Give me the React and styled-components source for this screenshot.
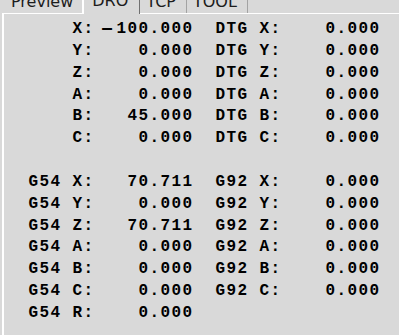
import React from "react";
import styled, { createGlobalStyle } from "styled-components";

const ADV = 11.0; // character advance in the DRO text
const LINE = 21.85;
const BG = "#d9d9d9";

const Global = createGlobalStyle`
  html, body {
    margin: 0;
    padding: 0;
    background: ${BG};
    overflow: hidden;
  }
`;

const Window = styled.div`
  width: 399px;
  height: 335px;
  display: flex;
  flex-direction: column;
  background: ${BG};
  overflow: hidden;
`;

const TabBar = styled.div`
  display: flex;
  height: 13px;
  padding-left: 5px;
  flex: none;
`;

const Tab = styled.div`
  position: relative;
  box-sizing: border-box;
  height: ${(p) => (p.$active ? "14px" : "13px")};
  margin: ${(p) => (p.$active ? "0 0 -1px -2px" : "0")};
  padding: ${(p) => (p.$active ? "0 11px 0 8px" : "0 10px 0 6px")};
  border-left: ${(p) => (p.$active ? "2px solid #ffffff" : "none")};
  border-right: 1px solid ${(p) => (p.$active ? "#707070" : "#a3a3a3")};
  background: ${BG};
  z-index: ${(p) => (p.$active ? 2 : 0)};
  font-family: "DejaVu Sans", sans-serif;
  font-size: 16px;
  line-height: 16px;
  color: #1c1c1c;
  white-space: nowrap;
`;

const TabLabel = styled.span`
  display: block;
  margin-top: ${(p) => (p.$active ? "-7.5px" : "-6px")};
`;

const Panel = styled.div`
  flex: 1;
  margin-left: 2px;
  border-top: 1px solid #ffffff;
  border-left: 2px solid #ffffff;
  background: ${BG};
  padding: 5px 0 0 24.5px;
  position: relative;
  z-index: 1;
`;

const Dro = styled.div`
  display: flex;
  flex-direction: column;
  font-family: "Liberation Mono", "Courier New", monospace;
  font-weight: bold;
  font-size: 16px;
  letter-spacing: ${ADV - 9.6}px;
  color: #000;
`;

const Line = styled.div`
  display: flex;
  gap: ${2 * ADV}px;
  height: ${LINE}px;
  line-height: ${LINE}px;
  white-space: pre;
`;

const Block = styled.div`
  display: grid;
  grid-template-columns: ${4 * ADV}px ${2 * ADV}px ${9 * ADV}px;
`;

const Prefix = styled.span``;
const Axis = styled.span``;
const Value = styled.span`
  text-align: right;
`;
const Minus = styled.span`
  display: inline-block;
  transform: translateX(-2.5px) scaleX(2.2);
  transform-origin: 5px 50%;
`;

function Num({ v }) {
  if (v.startsWith("-")) {
    return (
      <Value>
        <Minus>-</Minus>
        {v.slice(1)}
      </Value>
    );
  }
  return <Value>{v}</Value>;
}

function Entry({ prefix, axis, value }) {
  return (
    <Block>
      <Prefix>{prefix}</Prefix>
      <Axis>{axis}:</Axis>
      <Num v={value} />
    </Block>
  );
}

const pos = [
  ["X", "-100.000"],
  ["Y", "0.000"],
  ["Z", "0.000"],
  ["A", "0.000"],
  ["B", "45.000"],
  ["C", "0.000"],
];

const g54 = [
  ["X", "70.711"],
  ["Y", "0.000"],
  ["Z", "70.711"],
  ["A", "0.000"],
  ["B", "0.000"],
  ["C", "0.000"],
  ["R", "0.000"],
];

const g92 = ["X", "Y", "Z", "A", "B", "C"];

const tabs = ["Preview", "DRO", "TCP", "TOOL"];

export default function App() {
  return (
    <>
      <Global />
      <Window>
        <TabBar>
          {tabs.map((t) => (
            <Tab key={t} $active={t === "DRO"}>
              <TabLabel $active={t === "DRO"}>{t}</TabLabel>
            </Tab>
          ))}
        </TabBar>
        <Panel>
          <Dro>
            {pos.map(([ax, v]) => (
              <Line key={"p" + ax}>
                <Entry prefix="" axis={ax} value={v} />
                <Entry prefix="DTG" axis={ax} value="0.000" />
              </Line>
            ))}
            <Line />
            {g54.map(([ax, v], i) => (
              <Line key={"g" + ax}>
                <Entry prefix="G54" axis={ax} value={v} />
                {g92[i] && <Entry prefix="G92" axis={g92[i]} value="0.000" />}
              </Line>
            ))}
          </Dro>
        </Panel>
      </Window>
    </>
  );
}
